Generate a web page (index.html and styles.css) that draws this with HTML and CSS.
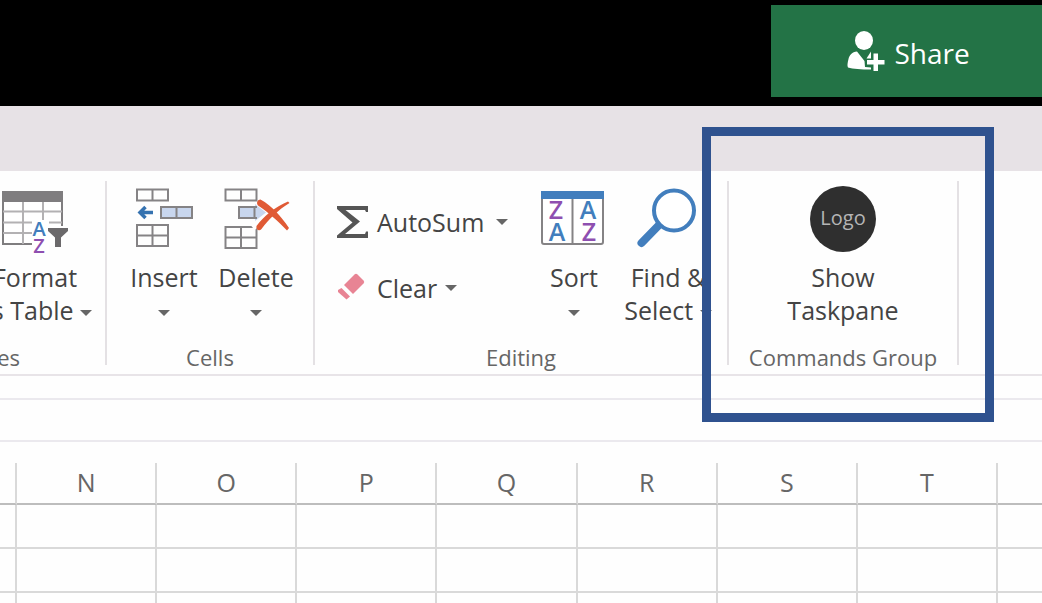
FILE: index.html
```html
<!DOCTYPE html>
<html lang="en">
<head>
<meta charset="utf-8">
<title>Workbook</title>
<link rel="stylesheet" href="styles.css">
</head>
<body>
<div class="app">
  <header class="titlebar">
    <button class="share" type="button">
      <svg width="38" height="40" viewBox="0 0 38 40" fill="#fff" aria-hidden="true">
        <ellipse cx="17" cy="9.500" rx="9" ry="9.500"/>
        <path d="M10 20.500C5 21 2.500 24 1.500 28 .5 32 0 35 1 36.500c5 1.500 13 2 23 2V36.500l-6-.5-.5-6z"/>
        <path d="M24 20.500 19.500 27.500H24z"/>
        <path d="M26.500 22.500h4.500v6.500h6.500v4.500H31V40h-4.500v-6.500H20V29h6.500z"/>
      </svg>
      <span class="share-text">Share</span>
    </button>
  </header>
  <div class="tabstrip"></div>

  <div class="ribbon">
    <section class="group group-styles" aria-label="Styles">
      <div class="tools">
        <button class="tool" type="button">
          <svg class="icon" viewBox="0 0 66 66" aria-hidden="true">
            <rect x="1" y="6" width="59" height="52" fill="#fff" stroke="#7f7d7f" stroke-width="2"/>
            <path d="M1 25.500h59M1 36.500h59M1 47h59M21 15v43M41 15v43" stroke="#b3b1b3" stroke-width="2"/>
            <path d="M0 5h61v11H0z" fill="#7f7d7f"/>
            <path d="M30 34h17v32H30zM46 40h18v19H46z" fill="#fff"/>
            <text class="letter blue" x="37" y="50">A</text>
            <text class="letter purple" x="37" y="67">Z</text>
            <path d="M46 42h20v3l-7 6.500V61h-6v-9.500L46 45z" fill="#6b696b"/>
          </svg>
          <span>Format</span>
          <span>as Table <i class="caret"></i></span>
        </button>
      </div>
      <div class="label">Styles</div>
    </section>
    <div class="divider"></div>

    <section class="group group-cells" aria-label="Cells">
      <div class="tools">
        <button class="tool" type="button">
          <svg class="icon" viewBox="0 0 66 66" fill="none" stroke="#858385" stroke-width="2" aria-hidden="true">
            <path d="M6 3.500h31v11H6zM21.500 3.500v11M6 39h31v21H6zM21.500 39v21M6 49.500h31"/>
            <path d="M30 21h31v11H30z" fill="#c8d6ee"/><path d="M45.500 21v11"/>
            <path d="M22 26.500H9M14.500 21 9 26.500l5.500 5.500" stroke="#3572b0" stroke-width="3.500"/>
          </svg>
          <span>Insert</span>
          <span><i class="caret"></i></span>
        </button>
        <button class="tool" type="button">
          <svg class="icon" viewBox="0 0 66 66" fill="none" stroke="#858385" stroke-width="2" aria-hidden="true">
            <path d="M2.500 3.500h31v11h-31zM18 3.500v11M2.500 41h31v21h-31zM18 41v21M2.500 51.500h31"/>
            <path d="M32 21v-3l11 8.500L32 35v-3z" fill="#c8d6ee" stroke="none"/>
            <path d="M34 21H16v11h18" fill="#c8d6ee"/><path d="M31.500 21v11"/>
            <path d="M30 42l6-5" stroke="#fff" stroke-width="5"/>
            <path d="M37.500 13.500C49 20 58 30 66 42l-2 2.500C54 34 46 27 35 19.500c-2-2.500-.5-6 2.500-6z" fill="#e05a35" stroke="none"/>
            <path d="M65 15.500 66.500 17C55 24 46 33 38.500 43c-2 2.500-6 1-5-3C41 30 52 21 65 15.500z" fill="#e05a35" stroke="none"/>
          </svg>
          <span>Delete</span>
          <span><i class="caret"></i></span>
        </button>
      </div>
      <div class="label">Cells</div>
    </section>
    <div class="divider"></div>

    <section class="group group-editing" aria-label="Editing">
      <div class="tools">
        <div class="stack">
          <button class="row-tool" type="button">
            <svg width="32" height="32" viewBox="0 0 32 32" aria-hidden="true">
              <path d="M0 0h31v6h-2l-1-2H8.500L23 15.500 8 28h20l1-2.500h2V32H0v-2.500L15.500 16.500 0 3z" fill="#555"/>
            </svg>
            <span>AutoSum</span><i class="caret caret-wide"></i>
          </button>
          <button class="row-tool" type="button">
            <svg width="32" height="32" viewBox="0 0 32 32" fill="#e88494" aria-hidden="true">
              <path d="M7 13 17.500 2.500q1.500-1.500 3 0l6 6q1.500 1.500 0 3L16 22z"/>
              <path d="M4.500 16 13 24.500 9.500 27.500 1 20V18z"/>
            </svg>
            <span>Clear</span><i class="caret"></i>
          </button>
        </div>
        <button class="tool" type="button">
          <svg class="icon" viewBox="0 0 66 66" aria-hidden="true">
            <rect x="1" y="6" width="61" height="52" rx="2" fill="#fff" stroke="#858385" stroke-width="2"/>
            <path d="M31.500 12v46" stroke="#858385" stroke-width="2"/>
            <path d="M0 5h63v8H0z" fill="#427ebd"/>
            <text class="letter large purple" x="15" y="33">Z</text>
            <text class="letter large blue" x="47" y="33">A</text>
            <text class="letter large blue" x="16" y="55">A</text>
            <text class="letter large purple" x="48" y="55">Z</text>
          </svg>
          <span>Sort</span>
          <span><i class="caret"></i></span>
        </button>
        <button class="tool" type="button">
          <svg class="icon" viewBox="0 0 66 66" fill="none" aria-hidden="true">
            <path d="M25 38 6.500 57" stroke="#427ebd" stroke-width="8" stroke-linecap="round"/>
            <circle cx="39" cy="24.500" r="20" fill="#fff" stroke="#427ebd" stroke-width="4"/>
          </svg>
          <span>Find &amp;</span>
          <span>Select <i class="caret"></i></span>
        </button>
      </div>
      <div class="label">Editing</div>
    </section>
    <div class="divider"></div>

    <section class="group group-commands" aria-label="Commands Group">
      <div class="tools">
        <button class="tool" type="button">
          <span class="logo">Logo</span>
          <span>Show</span>
          <span>Taskpane</span>
        </button>
      </div>
      <div class="label">Commands Group</div>
      <div class="highlight"></div>
    </section>
    <div class="divider"></div>
  </div>

  <div class="spacer"></div>
  <div class="formula"></div>

  <main class="sheet">
    <table>
      <colgroup><col class="col-first"><col><col><col><col><col><col><col><col class="col-last"></colgroup>
      <thead><tr><th></th><th>N</th><th>O</th><th>P</th><th>Q</th><th>R</th><th>S</th><th>T</th><th></th></tr></thead>
      <tbody>
        <tr><td></td><td></td><td></td><td></td><td></td><td></td><td></td><td></td><td></td></tr>
        <tr><td></td><td></td><td></td><td></td><td></td><td></td><td></td><td></td><td></td></tr>
        <tr><td></td><td></td><td></td><td></td><td></td><td></td><td></td><td></td><td></td></tr>
      </tbody>
    </table>
  </main>
</div>
</body>
</html>
```
FILE: styles.css
```css
* { box-sizing: border-box; }

body {
  margin: 0;
  background: #fefefe;
  color: #444;
  font: 25px/33px "Open Sans", "Noto Sans", sans-serif;
}

button {
  border: 0;
  padding: 0;
  background: none;
  color: inherit;
  font: inherit;
}

.app {
  display: flex;
  flex-direction: column;
  height: 100vh;
  overflow: hidden;
}

.app > * { flex-shrink: 0; }

.titlebar {
  display: flex;
  justify-content: flex-end;
  padding: 5px 0 9px;
  background: #000;
}

.share {
  display: flex;
  align-items: center;
  justify-content: center;
  gap: 9px;
  width: 271px;
  height: 92px;
  padding-left: 4px;
  background: #237346;
  color: #fff;
  font-size: 28px;
}

.share-text { padding-top: 4px; }

.tabstrip {
  height: 65px;
  background: #e7e2e6;
}

.ribbon {
  display: flex;
  padding: 10px 0 4px;
  border-bottom: 2px solid #e8e4e8;
}

.divider {
  width: 2px;
  margin-bottom: 5px;
  background: #e4e1e4;
}

.group {
  display: flex;
  flex-direction: column;
  justify-content: space-between;
  height: 189px;
  padding-top: 5px;
}

.tools {
  display: flex;
  justify-content: center;
}

.tool {
  display: flex;
  flex-direction: column;
  align-items: center;
  width: 92px;
  white-space: nowrap;
}

.icon, .logo {
  width: 66px;
  height: 66px;
  margin-bottom: 9px;
  overflow: visible;
}

.logo {
  border-radius: 50%;
  background: #2f2f2f;
  color: #b5b5b5;
  font-size: 20px;
  line-height: 64px;
}

.letter {
  font: 600 20px "Open Sans", sans-serif;
  text-anchor: middle;
}

.large { font-size: 25px; }
.blue { fill: #427ebd; }
.purple { fill: #8e4fb0; }

.label {
  color: #666;
  font-size: 22px;
  line-height: 26px;
  text-align: center;
}

.caret {
  display: inline-block;
  border: 6px solid transparent;
  border-top-color: #666;
  border-bottom: 0;
  vertical-align: middle;
}

.group-styles {
  width: 105px;
  overflow: hidden;
}

.group-styles .tools {
  justify-content: flex-end;
  padding-right: 24px;
}

.group-styles .label {
  align-self: flex-end;
  padding-right: 85px;
}

.group-cells { width: 206px; }

.group-editing { width: 412px; }

.group-editing .tools {
  gap: 2px;
  padding: 0 13px 0 22px;
}

.stack {
  display: flex;
  flex: 1;
  flex-direction: column;
  gap: 22px;
  padding-top: 14px;
}

.row-tool {
  display: flex;
  align-items: center;
  gap: 8px;
  height: 44px;
}

.caret-wide { margin-left: 4px; }

.group-commands {
  position: relative;
  width: 228px;
}

.group-commands .tools .tool { width: 120px; }

.highlight {
  position: absolute;
  inset: -54px -37px -52px -27px;
  border: 9px solid #2f528f;
  pointer-events: none;
}

.spacer {
  height: 24px;
  border-bottom: 2px solid #ebe9ee;
}

.formula {
  height: 42px;
  border-bottom: 2px solid #ebe9ee;
}

.sheet { padding-top: 21px; }

table {
  width: 100%;
  border-spacing: 0;
  table-layout: fixed;
}

.col-first { width: 17px; }
.col-last { width: 44px; }

th, td {
  height: 44px;
  padding: 0;
  border-right: 2px solid #d9d9d9;
  border-bottom: 2px solid #d9d9d9;
}

th {
  height: 42px;
  padding-bottom: 2px;
  border-bottom-color: #bdbdbd;
  color: #666;
  font-size: 25px;
  font-weight: 400;
}

th:last-child, td:last-child { border-right: 0; }
```
